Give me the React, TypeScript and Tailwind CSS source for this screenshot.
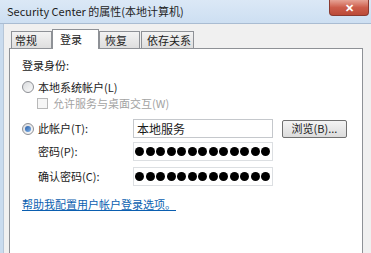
const cjk = "font-['Noto_Sans_CJK_SC','Noto_Sans',sans-serif]";

function Radio({ checked }: { checked?: boolean }) {
  return (
    <span className="flex h-[12px] w-[12px] flex-shrink-0 items-center justify-center rounded-full border border-[#8d8f94] bg-gradient-to-br from-[#d9dbde] to-[#fbfbfb]">
      {checked && <span className="h-[6px] w-[6px] rounded-full bg-gradient-to-br from-[#2a5fa8] to-[#7fb2e8]" />}
    </span>
  );
}

function Dots() {
  return (
    <div className="flex h-full items-center gap-[1.5px] overflow-hidden pl-[1px]">
      {Array.from({ length: 14 }).map((_, i) => (
        <span key={i} className="h-[9px] w-[9px] flex-shrink-0 rounded-full bg-black" />
      ))}
    </div>
  );
}

const tabs = [
  { label: '常规', w: 'w-[41px]', pl: 'pl-[3px]' },
  { label: '登录', w: 'w-[47px]', pl: 'pl-[7px]', active: true },
  { label: '恢复', w: 'w-[41px]', pl: 'pl-[5px]' },
  { label: '依存关系', w: 'w-[53px] ml-[1px]', pl: 'pl-[5px]' },
];

export default function App() {
  return (
    <div className={`flex h-[253px] w-[371px] flex-col overflow-hidden bg-[#f0f0f0] text-[11px] text-[#1b1b1b] ${cjk}`}>
      {/* Title bar */}
      <div className="flex h-[24px] flex-shrink-0 justify-between border-b border-[#a9bcd2] bg-gradient-to-b from-[#dbe8f6] to-[#cddff2]">
        <span className="self-center pl-[7px] text-[11px] text-[#1e1e1e]">Security Center 的属性(本地计算机)</span>
        <div className="mr-[2px] flex h-[16px] w-[40px] items-center justify-center rounded-b-[4px] border border-t-0 border-[#8a3a30] bg-gradient-to-b from-[#e6a396] via-[#cc5d4b] to-[#bb4a38]">
          <span className="text-[11px] font-bold leading-none text-white">✕</span>
        </div>
      </div>

      <div className="flex flex-1">
        {/* left frame */}
        <div className="w-[4px] border-r border-[#b6c6d8] bg-[#c9dbee]" />
        <div className="flex flex-1 flex-col pl-[5px] pr-[8px] pt-[5px]">
          {/* Tabs */}
          <div className="flex h-[19px] items-end pl-[2px]">
            {tabs.map((t) =>
              t.active ? (
                <div
                  key={t.label}
                  className={`relative z-10 -mb-[1px] flex h-[20px] items-start border border-b-0 border-[#8e9196] bg-white pt-[1px] ${t.w} ${t.pl}`}
                >
                  {t.label}
                </div>
              ) : (
                <div
                  key={t.label}
                  className={`flex h-[17px] items-center border border-b-0 border-[#8e9196] bg-gradient-to-b from-[#f3f3f3] to-[#dedede] ${t.w} ${t.pl}`}
                >
                  {t.label}
                </div>
              )
            )}
          </div>

          {/* Panel */}
          <div className="h-[240px] flex-shrink-0 border border-[#8e9196] bg-white pl-[12px] pt-[8px]">
            <div className="flex h-[16px] items-center">登录身份:</div>

            <div className="mt-[6px] flex h-[16px] items-center gap-[4px]">
              <Radio />
              <span>本地系统帐户(L)</span>
            </div>

            <div className="flex h-[16px] items-center gap-[5px] pl-[15px] text-[#a3a3a3]">
              <span className="h-[11px] w-[11px] border border-[#b8b8b8] bg-[#f6f6f6]" />
              <span>允许服务与桌面交互(W)</span>
            </div>

            <div className="mt-[8px] flex h-[19px] items-center">
              <div className="flex w-[111px] items-center gap-[4px]">
                <Radio checked />
                <span>此帐户(T):</span>
              </div>
              <div className="flex h-[19px] w-[140px] items-center border border-[#c5c8cc] pl-[3px] text-[12px]">本地服务</div>
              <div className="ml-[9px] flex h-[18px] w-[65px] items-center justify-center rounded-[2px] border border-[#707070] bg-gradient-to-b from-[#f4f4f4] to-[#dcdcdc]">
                浏览(B)...
              </div>
            </div>

            <div className="mt-[4px] flex h-[19px] items-center">
              <span className="w-[111px] pl-[16px]">密码(P):</span>
              <div className="h-[19px] w-[140px] border border-[#dcdfe2]">
                <Dots />
              </div>
            </div>

            <div className="mt-[6px] flex h-[19px] items-center">
              <span className="w-[111px] pl-[16px]">确认密码(C):</span>
              <div className="h-[19px] w-[140px] border border-[#dcdfe2]">
                <Dots />
              </div>
            </div>

            <div className="mt-[10px] flex h-[16px] items-center">
              <span className="text-[#0b5fb0] underline">帮助我配置用户帐户登录选项。</span>
            </div>
          </div>
        </div>
      </div>
    </div>
  );
}
